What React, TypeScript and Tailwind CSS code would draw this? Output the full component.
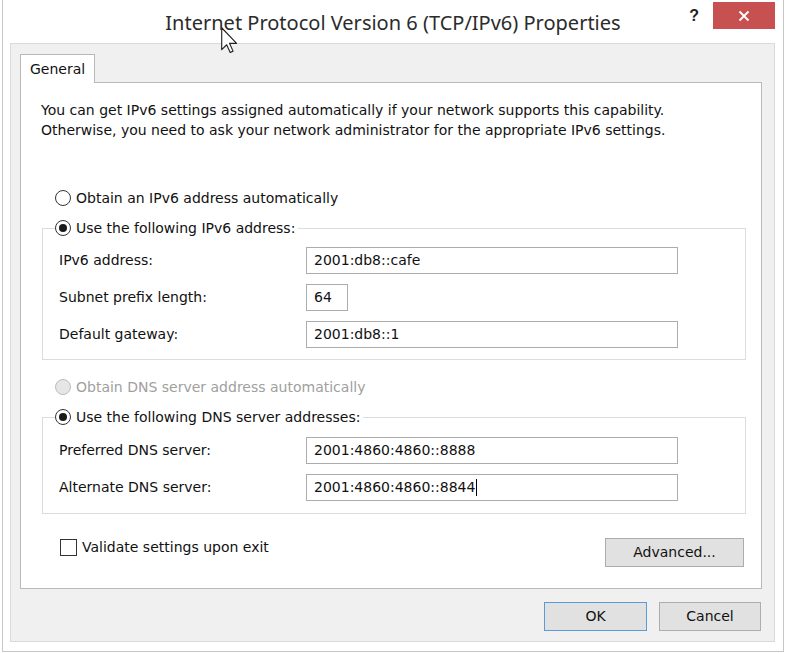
import React from "react";

const FONT = { fontFamily: '"DejaVu Sans", Verdana, sans-serif' };

function Radio({ checked, disabled }: { checked?: boolean; disabled?: boolean }) {
  return (
    <span
      className={
        "w-[16px] h-[16px] rounded-full border flex items-center justify-center shrink-0 " +
        (disabled ? "border-[#bcbcbc] bg-[#e6e6e6]" : "border-[#333333] bg-white")
      }
    >
      {checked && <span className="w-[8px] h-[8px] rounded-full bg-[#1a1a1a]" />}
    </span>
  );
}

function Field({ value, w, caret }: { value: string; w: string; caret?: boolean }) {
  return (
    <div
      className={
        w +
        " h-[27px] border border-[#acacac] bg-white flex items-center pl-[7px] text-[#111]"
      }
    >
      <span>{value}</span>
      {caret && <span className="w-px h-[17px] bg-black ml-[1px]" />}
    </div>
  );
}

function Btn({ label, w, primary }: { label: string; w: string; primary?: boolean }) {
  return (
    <div
      className={
        w +
        " h-[29px] border bg-[#e1e1e1] flex items-center justify-center text-[#111] " +
        (primary ? "border-[#5b9bd5]" : "border-[#adadad]")
      }
    >
      {label}
    </div>
  );
}

export default function App() {
  return (
    <div className="w-[785px] h-[653px] bg-white relative overflow-hidden text-[14px]" style={FONT}>
      <div className="ml-[2px] mr-[1px] h-[652px] border-x border-b border-[#c6c6c6] flex flex-col">
        {/* Title bar */}
        <div className="h-[42px] flex">
          <div className="flex-1" />
          <div
            className="pt-[9px] text-[20px] leading-[28px] text-[#2b2b2b] whitespace-nowrap"
            style={{ fontFamily: '"Noto Sans", "Open Sans", sans-serif' }}
          >
            Internet Protocol Version 6 (TCP/IPv6) Properties
          </div>
          <div className="flex-1 flex justify-end items-start">
            <div
              className="mt-[4px] mr-[14px] text-[16px] font-bold text-[#222]"
              style={{ fontFamily: '"Liberation Sans", Arial, sans-serif' }}
            >
              ?
            </div>
            <div className="mt-[2px] mr-[8px] w-[62px] h-[27px] bg-[#c75050] flex items-center justify-center">
              <svg width="12" height="12" viewBox="0 0 12 12">
                <path d="M1.5 1.5 L10.5 10.5 M10.5 1.5 L1.5 10.5" stroke="white" strokeWidth="1.8" />
              </svg>
            </div>
          </div>
        </div>

        {/* Gray client area */}
        <div className="ml-[7px] mr-[8px] mt-px mb-[9px] flex-1 border border-[#dadada] bg-[#f0f0f0] pt-[10px] pl-[9px] pr-[12px] flex flex-col">
          <div className="w-[75px] h-[29px] bg-white border border-b-0 border-[#b9b9b9] -mb-px relative z-10 flex items-center pl-[9px] text-[#111]">
            General
          </div>
          <div className="h-[507px] border border-[#b9b9b9] bg-white pt-[17px] pl-[20px] text-[#111]">
            <div className="leading-[20px]">
              <div>You can get IPv6 settings assigned automatically if your network supports this capability.</div>
              <div>Otherwise, you need to ask your network administrator for the appropriate IPv6 settings.</div>
            </div>

            <div className="mt-[48px] ml-[14px] h-[20px] flex items-center gap-[5px]">
              <Radio />
              <span>Obtain an IPv6 address automatically</span>
            </div>

            <fieldset className="mt-[10px] ml-px w-[704px] border border-[#dcdcdc] pl-[12px] pt-[9px] pb-[11px]">
              <legend className="h-[20px] flex items-center gap-[5px] pr-[3px]">
                <Radio checked />
                <span>Use the following IPv6 address:</span>
              </legend>
              <div className="pl-[4px] grid grid-cols-[247px_1fr] gap-y-[10px] items-center">
                <span>IPv6 address:</span>
                <Field value="2001:db8::cafe" w="w-[372px]" />
                <span>Subnet prefix length:</span>
                <Field value="64" w="w-[42px]" />
                <span>Default gateway:</span>
                <Field value="2001:db8::1" w="w-[372px]" />
              </div>
            </fieldset>

            <div className="mt-[17px] ml-[14px] h-[20px] flex items-center gap-[5px] text-[#a0a0a0]">
              <Radio disabled />
              <span>Obtain DNS server address automatically</span>
            </div>

            <fieldset className="mt-[10px] ml-px w-[704px] border border-[#dcdcdc] pl-[12px] pt-[10px] pb-[12px]">
              <legend className="h-[20px] flex items-center gap-[5px] pr-[3px]">
                <Radio checked />
                <span>Use the following DNS server addresses:</span>
              </legend>
              <div className="pl-[4px] grid grid-cols-[247px_1fr] gap-y-[10px] items-center">
                <span>Preferred DNS server:</span>
                <Field value="2001:4860:4860::8888" w="w-[372px]" />
                <span>Alternate DNS server:</span>
                <Field value="2001:4860:4860::8844" w="w-[372px]" caret />
              </div>
            </fieldset>

            <div className="mt-[24px] w-[703px] flex justify-between items-start">
              <div className="ml-[19px] mt-px h-[17px] flex items-center gap-[5px]">
                <span className="w-[17px] h-[17px] border border-[#333333] bg-white" />
                <span>Validate settings upon exit</span>
              </div>
              <Btn label="Advanced..." w="w-[139px]" />
            </div>
          </div>

          <div className="mt-[13px] flex justify-end gap-[12px] pr-px">
            <Btn label="OK" w="w-[103px]" primary />
            <Btn label="Cancel" w="w-[102px]" />
          </div>
        </div>
      </div>

      {/* Mouse cursor overlay */}
      <svg className="absolute left-[221px] top-[27px]" width="17" height="27" viewBox="0 0 12 19">
        <path
          d="M0.5 0.5 L0.5 16 L4 12.5 L6.5 18 L8.5 17 L6 11.5 L11 11.5 Z"
          fill="white"
          stroke="#222"
          strokeWidth="0.8"
          strokeLinejoin="round"
        />
      </svg>
    </div>
  );
}
